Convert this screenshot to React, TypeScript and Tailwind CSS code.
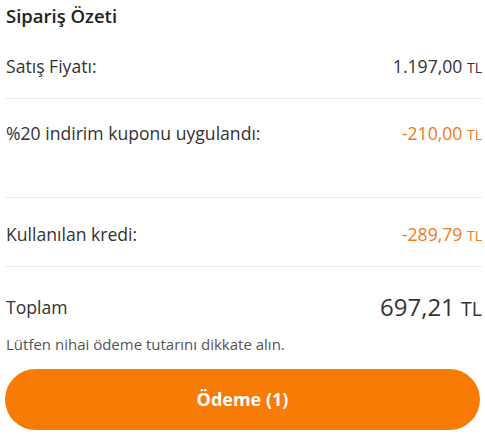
import React from 'react';

const orange = 'text-[#f27a1a]';

const Row: React.FC<{ label: string; value: string; tone?: string; cls: string }> = ({ label, value, tone, cls }) => (
    <div className={`flex justify-between items-start ${cls}`}>
        <span className="text-[17.6px] leading-6 text-[#333]">{label}</span>
        <span className={`text-[17.6px] leading-6 ${tone ?? 'text-[#333]'}`}>
            {value} <span className="text-[14px]">TL</span>
        </span>
    </div>
);

export default function App() {
    return (
        <div className="w-[485px] h-[438px] bg-white pl-[5px] pr-[3px] font-['Open_Sans',sans-serif] overflow-hidden">
            <div className="h-[33px] pt-[4px] pl-px">
                <h2 className="text-[18.5px] leading-6 font-semibold text-[#222]">Sipariş Özeti</h2>
            </div>
            <Row label="Satış Fiyatı:" value="1.197,00" cls="h-[65px] pt-[21px] pl-px" />
            <div className="h-px bg-[#eaeaea]" />
            <Row label="%20 indirim kuponu uygulandı:" value="-210,00" tone={orange} cls="h-[98px] pt-[22px] pl-px" />
            <div className="h-px bg-[#eaeaea]" />
            <Row label="Kullanılan kredi:" value="-289,79" tone={orange} cls="h-[68px] pt-[24px] pl-px" />
            <div className="h-px bg-[#eaeaea]" />
            <div className="pt-[26px] pl-px">
                <div className="flex justify-between items-center h-7">
                    <span className="text-[17.6px] text-[#333]">Toplam</span>
                    <span className="text-[24px] text-[#333]">
                        697,21 <span className="text-[19.5px]">TL</span>
                    </span>
                </div>
                <p className="mt-[13px] h-5 text-[15px] leading-5 text-[#555]">Lütfen nihai ödeme tutarını dikkate alın.</p>
            </div>
            <button className="mt-[15px] w-[475px] h-[61px] rounded-full bg-[#f77b05] text-white text-[18px] font-bold">
                Ödeme (1)
            </button>
        </div>
    );
}
